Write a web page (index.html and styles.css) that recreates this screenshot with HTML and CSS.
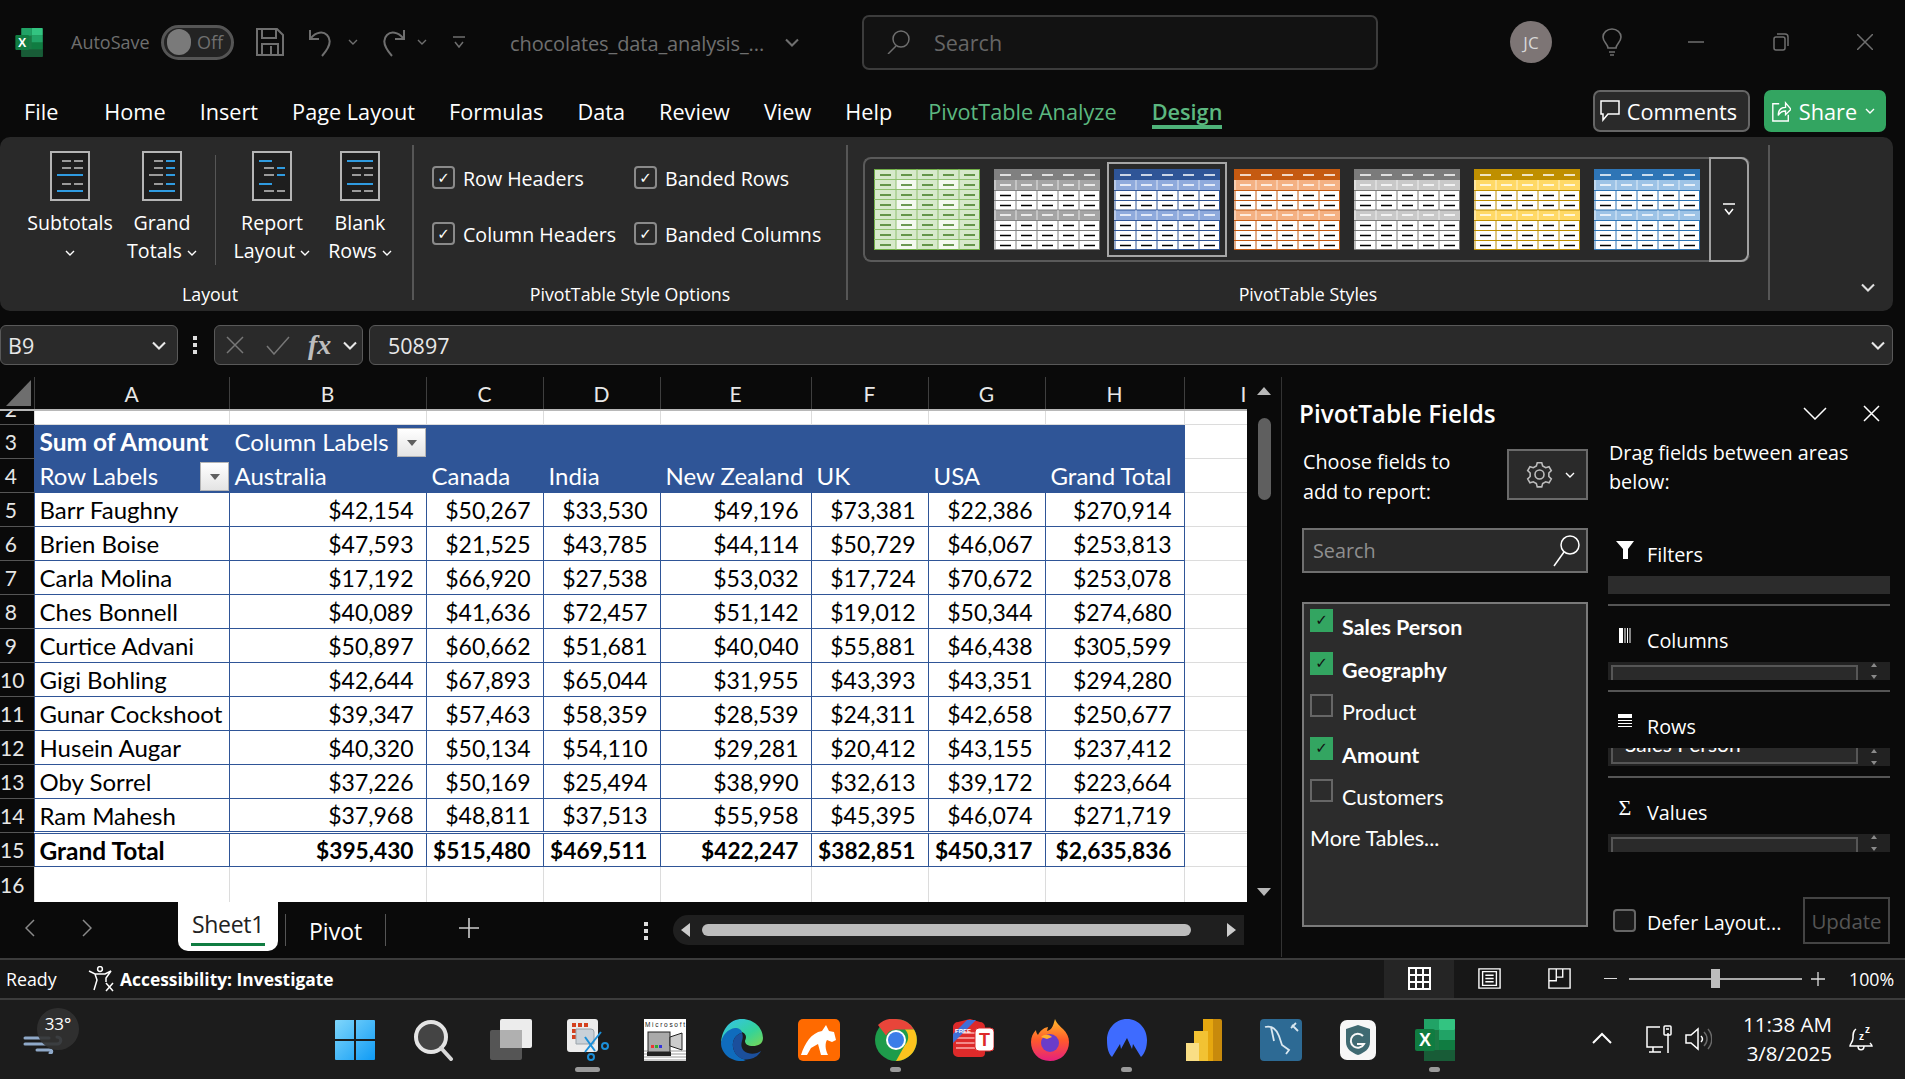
FILE: index.html
```html
<!DOCTYPE html>
<html lang="en">
<head>
    <meta charset="UTF-8">
    <title>chocolates_data_analysis - Excel</title>
    <link rel="stylesheet" href="styles.css">
</head>
<body>
<svg class="defs" width="0" height="0">
    <symbol id="chev" viewBox="0 0 10 6"><path d="M1 1l4 4 4-4" fill="none" stroke="currentColor" stroke-width="1.4"/></symbol>
    <symbol id="xl" viewBox="0 0 40 42">
        <rect x="9" width="31" height="42" rx="2" fill="#1b7a45"/>
        <rect x="24" width="16" height="11" rx="1" fill="#33c481"/>
        <rect x="9" width="15" height="11" fill="#21a366"/>
        <rect x="24" y="11" width="16" height="10" fill="#21a366"/>
        <rect x="24" y="21" width="16" height="10" fill="#107c41"/>
        <rect x="9" y="31" width="31" height="11" fill="#185c37"/>
        <rect y="10" width="20" height="22" rx="2" fill="#107c41"/>
        <text x="10" y="27" class="xl-x">X</text>
    </symbol>
    <symbol id="thumb" viewBox="0 0 106 81">
        <rect width="106" height="81" fill="#fff"/>
        <rect width="106" height="11" class="th-head"/>
        <rect y="11" width="106" height="10" class="th-band"/>
        <rect y="41" width="106" height="10" class="th-band"/>
        <path d="M1 21V41M1 51V81M22 21V41M22 51V81M43 21V41M43 51V81M64 21V41M64 51V81M85 21V41M85 51V81M105.500 21V41M105.500 51V81M0 21.500H106M0 31.500H106M0 41H106M0 51.500H106M0 61.500H106M0 71.500H106M0 80.500H106" class="th-line"/>
        <path d="M1 11V21M22 11V21M43 11V21M64 11V21M85 11V21M1 41V51M22 41V51M43 41V51M64 41V51M85 41V51" stroke="#fff" fill="none" opacity=".7"/>
        <path d="M6 6H106M6 16H106M6 46H106" stroke="#fff" stroke-width="1.6" stroke-dasharray="11 10"/>
        <path d="M6 26.500H106M6 36.500H106M6 56.500H106M6 66.500H106M6 76.500H106" stroke="#000" stroke-width="1.6" stroke-dasharray="11 10"/>
    </symbol>
    <symbol id="spin" viewBox="0 0 8 16"><path d="M4 0l3 4H1zM4 16L1 12h6z" fill="#8a8a8a"/></symbol>
</svg>

<div class="app">
    <header class="titlebar">
        <svg class="t-logo" viewBox="0 0 40 42"><use href="#xl"/></svg>
        <span class="t-autosave">AutoSave</span>
        <span class="toggle"><i class="toggle-knob"></i><span class="toggle-text">Off</span></span>
        <svg class="t-save" viewBox="0 0 28 28" fill="none" stroke="#6f6f6f" stroke-width="2"><path d="M1 1h20l6 6v20H1zM6 1v9h14V1M6 27V16h16v11M15 18v9"/></svg>
        <svg class="t-undo" viewBox="0 0 25 29" fill="none" stroke="#6f6f6f" stroke-width="2"><path d="M1 2v9h9M2 10c5-6 12-7 16-3 5 5 3 12-5 21"/></svg>
        <svg class="t-chev-a"><use href="#chev"/></svg>
        <svg class="t-redo" viewBox="0 0 26 29" fill="none" stroke="#6f6f6f" stroke-width="2"><path d="M25 2v9h-9M24 10c-5-6-12-7-16-3-5 5-3 12 5 21"/></svg>
        <svg class="t-chev-b"><use href="#chev"/></svg>
        <svg class="t-custom" viewBox="0 0 12 13" fill="none" stroke="#6f6f6f" stroke-width="1.5"><path d="M0 1h12M2 6l4 5 4-5"/></svg>
        <span class="t-file">chocolates_data_analysis_...</span>
        <svg class="t-chev-c"><use href="#chev"/></svg>
        <div class="t-search">
            <svg class="t-search-ic" viewBox="0 0 23 24" fill="none" stroke="#6f6f6f" stroke-width="1.5"><circle cx="14" cy="9" r="8"/><path d="M9 16L1 24"/></svg>
            <span>Search</span>
        </div>
        <span class="avatar">JC</span>
        <svg class="t-bulb" viewBox="0 0 20 28" fill="none" stroke="#6f6f6f" stroke-width="1.6"><path d="M6 20c0-4-5-6-5-11a9 8 0 0 1 18 0c0 5-5 7-5 11zM7 24h6M8 27h4"/></svg>
        <svg class="t-min" viewBox="0 0 16 2"><path d="M0 1h16" stroke="#6f6f6f" stroke-width="1.5"/></svg>
        <svg class="t-restore" viewBox="0 0 16 18" fill="none" stroke="#6f6f6f" stroke-width="1.5"><rect x="1" y="4" width="11" height="13" rx="2"/><path d="M4 1h8a3 3 0 0 1 3 3v9"/></svg>
        <svg class="t-close" viewBox="0 0 16 16" fill="none" stroke="#6f6f6f" stroke-width="1.5"><path d="M0 0l16 16M16 0L0 16"/></svg>
    </header>

    <nav class="tabs">
        <a class="tab tab-file">File</a>
        <a class="tab">Home</a>
        <a class="tab">Insert</a>
        <a class="tab">Page Layout</a>
        <a class="tab">Formulas</a>
        <a class="tab">Data</a>
        <a class="tab">Review</a>
        <a class="tab">View</a>
        <a class="tab">Help</a>
        <a class="tab tab-green tab-analyze">PivotTable Analyze</a>
        <a class="tab tab-green tab-active">Design</a>
        <button class="btn-comments">
            <svg class="ic-comment" viewBox="0 0 20 22" fill="none" stroke="#fff" stroke-width="1.5"><path d="M1 1h18v13H8l-5 6v-6H1z"/></svg>
            Comments
        </button>
        <button class="btn-share">
            <svg class="ic-share" viewBox="0 0 22 24" fill="none" stroke="#fff" stroke-width="1.5"><path d="M9 4H2v19h17v-7M8 17c0-6 3-9 8-9V3l6 7-6 6v-4c-4 0-6 1-8 5z"/></svg>
            Share
            <svg class="ic-share-chev"><use href="#chev"/></svg>
        </button>
    </nav>

    <section class="ribbon">
        <div class="group group-layout">
            <div class="group-body">
                <button class="rb-btn rb-w1">
                    <svg class="rb-ic" viewBox="0 0 40 50"><rect x="1" y="1" width="38" height="48" fill="#1e1e1e" stroke="#b5b5b5" stroke-width="2"/><path d="M12 10h9M24 10h9M12 17h9M24 17h9M12 33h9M24 33h9" class="ln-gray"/><path d="M7 24h26M7 40h26" class="ln-blue"/></svg>
                    <span class="rb-text">Subtotals</span>
                    <span class="rb-text"><svg class="rb-chev"><use href="#chev"/></svg></span>
                </button>
                <button class="rb-btn rb-w2">
                    <svg class="rb-ic" viewBox="0 0 40 50"><rect x="1" y="1" width="38" height="48" fill="#1e1e1e" stroke="#b5b5b5" stroke-width="2"/><path d="M12 10h9M12 17h9M7 24h14M12 33h9" class="ln-gray"/><path d="M24 10h9M24 17h9M24 24h9M24 33h9M7 40h26" class="ln-blue"/></svg>
                    <span class="rb-text">Grand</span>
                    <span class="rb-text">Totals <svg class="rb-chev"><use href="#chev"/></svg></span>
                </button>
                <span class="rb-sep"></span>
                <button class="rb-btn rb-w3">
                    <svg class="rb-ic" viewBox="0 0 40 50"><rect x="1" y="1" width="38" height="48" fill="#1e1e1e" stroke="#b5b5b5" stroke-width="2"/><path d="M12 17h10M12 24h10M12 40h10M25 40h8" class="ln-gray"/><path d="M7 10h13M25 17h8M25 24h8M7 33h13" class="ln-blue"/></svg>
                    <span class="rb-text">Report</span>
                    <span class="rb-text">Layout <svg class="rb-chev"><use href="#chev"/></svg></span>
                </button>
                <button class="rb-btn rb-w4">
                    <svg class="rb-ic" viewBox="0 0 40 50"><rect x="1" y="1" width="38" height="48" fill="#1e1e1e" stroke="#b5b5b5" stroke-width="2"/><path d="M12 17h9M24 17h9M12 24h9M24 24h9M12 40h9M24 40h9" class="ln-gray"/><path d="M7 10h26M7 33h26" class="ln-blue"/></svg>
                    <span class="rb-text">Blank</span>
                    <span class="rb-text">Rows <svg class="rb-chev"><use href="#chev"/></svg></span>
                </button>
            </div>
            <div class="group-label">Layout</div>
        </div>
        <span class="group-sep"></span>
        <div class="group group-options">
            <div class="options">
                <label class="opt"><span class="opt-box">✓</span>Row Headers</label>
                <label class="opt"><span class="opt-box">✓</span>Banded Rows</label>
                <label class="opt"><span class="opt-box">✓</span>Column Headers</label>
                <label class="opt"><span class="opt-box">✓</span>Banded Columns</label>
            </div>
            <div class="group-label">PivotTable Style Options</div>
        </div>
        <span class="group-sep"></span>
        <div class="group group-styles">
            <div class="gallery">
                <svg class="thumb" viewBox="0 0 106 81">
                    <rect width="106" height="81" fill="#70ad47"/>
                    <rect x="1" y="1" width="104" height="79" fill="#d7e9cb"/>
                    <path d="M22 11H43V21H22zM64 11H85V21H64zM22 31H43V41H22zM64 31H85V41H64zM22 51H43V61H22zM64 51H85V61H64zM22 71H43V80H22zM64 71H85V80H64z" fill="#f4f9f0"/>
                    <path d="M22 0V81M43 0V81M64 0V81M85 0V81M0 10.500H106M0 20.500H106M0 30.500H106M0 40.500H106M0 50.500H106M0 60.500H106M0 70.500H106" stroke="#8fbf6f" fill="none"/>
                    <path d="M6 6H106M6 26H106M6 46H106M6 66H106M6 16H106M6 36H106M6 56H106M6 76H106" stroke="#3f7a1f" stroke-width="1.6" stroke-dasharray="11 10"/>
                </svg>
                <svg class="thumb th-gray" viewBox="0 0 106 81"><use href="#thumb"/></svg>
                <svg class="thumb th-blue thumb-on" viewBox="0 0 106 81"><use href="#thumb"/></svg>
                <svg class="thumb th-orange" viewBox="0 0 106 81"><use href="#thumb"/></svg>
                <svg class="thumb th-silver" viewBox="0 0 106 81"><use href="#thumb"/></svg>
                <svg class="thumb th-gold" viewBox="0 0 106 81"><use href="#thumb"/></svg>
                <svg class="thumb th-sky" viewBox="0 0 106 81"><use href="#thumb"/></svg>
                <button class="gallery-more">
                    <svg viewBox="0 0 12 13" fill="none" stroke="#fff" stroke-width="1.5"><path d="M0 1h12M2 6l4 5 4-5"/></svg>
                </button>
            </div>
            <div class="group-label">PivotTable Styles</div>
        </div>
        <span class="group-sep"></span>
        <svg class="ribbon-collapse"><use href="#chev"/></svg>
    </section>

    <div class="formula-bar">
        <div class="name-box"><span>B9</span><svg class="fb-chev"><use href="#chev"/></svg></div>
        <svg class="fb-dots" viewBox="0 0 4 18"><path d="M0 0h4v4H0zM0 7h4v4H0zM0 14h4v4H0z" fill="#ddd"/></svg>
        <div class="fx-box">
            <svg class="fx-ic" viewBox="0 0 20 20" fill="none" stroke="#777" stroke-width="1.5"><path d="M2 2l16 16M18 2L2 18"/></svg>
            <svg class="fx-ic" viewBox="0 0 24 20" fill="none" stroke="#777" stroke-width="1.5"><path d="M1 11l7 8L23 2"/></svg>
            <span class="fx-label">fx</span>
            <svg class="fb-chev"><use href="#chev"/></svg>
        </div>
        <div class="fx-input"><span>50897</span><svg class="fb-chev"><use href="#chev"/></svg></div>
    </div>

    <main class="workspace">
        <div class="sheet-area">
            <div class="sheet-row">
                <div class="grid-wrap">
                    <table class="pivot">
                        <colgroup>
                            <col class="c-head"><col class="c-a"><col class="c-b"><col class="c-c"><col class="c-d"><col class="c-e"><col class="c-f"><col class="c-g"><col class="c-h"><col class="c-i">
                        </colgroup>
                        <tr class="r-cols">
                            <th class="corner"><svg viewBox="0 0 25 26"><path d="M25 0v26H0z" fill="#6e6e6e"/></svg></th>
                            <th>A</th><th>B</th><th>C</th><th>D</th><th>E</th><th>F</th><th>G</th><th>H</th><th class="col-i">I</th>
                        </tr>
                        <tr class="r-clip">
                            <th class="rh"><div class="rh-clip"><span>2</span></div></th>
                            <td></td><td></td><td></td><td></td><td></td><td></td><td></td><td></td><td></td>
                        </tr>
                        <tr class="r-blue">
                            <th class="rh">3</th>
                            <td class="b">Sum of Amount</td>
                            <td class="has-filter">Column Labels<span class="filter-btn"></span></td>
                            <td></td><td></td><td></td><td></td><td></td><td></td><td class="plain"></td>
                        </tr>
                        <tr class="r-blue">
                            <th class="rh">4</th>
                            <td class="has-filter">Row Labels<span class="filter-btn"></span></td>
                            <td>Australia</td><td>Canada</td><td>India</td><td>New Zealand</td><td>UK</td><td>USA</td><td>Grand Total</td><td class="plain"></td>
                        </tr>
                        <tr class="r-data"><th class="rh">5</th><td>Barr Faughny</td><td>$42,154</td><td>$50,267</td><td>$33,530</td><td>$49,196</td><td>$73,381</td><td>$22,386</td><td>$270,914</td><td class="plain"></td></tr>
                        <tr class="r-data"><th class="rh">6</th><td>Brien Boise</td><td>$47,593</td><td>$21,525</td><td>$43,785</td><td>$44,114</td><td>$50,729</td><td>$46,067</td><td>$253,813</td><td class="plain"></td></tr>
                        <tr class="r-data"><th class="rh">7</th><td>Carla Molina</td><td>$17,192</td><td>$66,920</td><td>$27,538</td><td>$53,032</td><td>$17,724</td><td>$70,672</td><td>$253,078</td><td class="plain"></td></tr>
                        <tr class="r-data"><th class="rh">8</th><td>Ches Bonnell</td><td>$40,089</td><td>$41,636</td><td>$72,457</td><td>$51,142</td><td>$19,012</td><td>$50,344</td><td>$274,680</td><td class="plain"></td></tr>
                        <tr class="r-data"><th class="rh">9</th><td>Curtice Advani</td><td>$50,897</td><td>$60,662</td><td>$51,681</td><td>$40,040</td><td>$55,881</td><td>$46,438</td><td>$305,599</td><td class="plain"></td></tr>
                        <tr class="r-data"><th class="rh">10</th><td>Gigi Bohling</td><td>$42,644</td><td>$67,893</td><td>$65,044</td><td>$31,955</td><td>$43,393</td><td>$43,351</td><td>$294,280</td><td class="plain"></td></tr>
                        <tr class="r-data"><th class="rh">11</th><td>Gunar Cockshoot</td><td>$39,347</td><td>$57,463</td><td>$58,359</td><td>$28,539</td><td>$24,311</td><td>$42,658</td><td>$250,677</td><td class="plain"></td></tr>
                        <tr class="r-data"><th class="rh">12</th><td>Husein Augar</td><td>$40,320</td><td>$50,134</td><td>$54,110</td><td>$29,281</td><td>$20,412</td><td>$43,155</td><td>$237,412</td><td class="plain"></td></tr>
                        <tr class="r-data"><th class="rh">13</th><td>Oby Sorrel</td><td>$37,226</td><td>$50,169</td><td>$25,494</td><td>$38,990</td><td>$32,613</td><td>$39,172</td><td>$223,664</td><td class="plain"></td></tr>
                        <tr class="r-data r-last"><th class="rh">14</th><td>Ram Mahesh</td><td>$37,968</td><td>$48,811</td><td>$37,513</td><td>$55,958</td><td>$45,395</td><td>$46,074</td><td>$271,719</td><td class="plain"></td></tr>
                        <tr class="r-data r-total"><th class="rh">15</th><td>Grand Total</td><td>$395,430</td><td>$515,480</td><td>$469,511</td><td>$422,247</td><td>$382,851</td><td>$450,317</td><td>$2,635,836</td><td class="plain"></td></tr>
                        <tr class="r-empty"><th class="rh">16</th><td></td><td></td><td></td><td></td><td></td><td></td><td></td><td></td><td></td></tr>
                    </table>
                </div>
                <div class="vscroll">
                    <span class="arrow-up"></span>
                    <span class="vscroll-thumb"></span>
                    <span class="arrow-down"></span>
                </div>
            </div>
            <div class="sheet-tabs">
                <svg class="nav-arrow nav-prev" viewBox="0 0 10 18" fill="none" stroke="#8a8a8a" stroke-width="1.5"><path d="M9 1L1 9l8 8"/></svg>
                <svg class="nav-arrow nav-next" viewBox="0 0 10 18" fill="none" stroke="#8a8a8a" stroke-width="1.5"><path d="M1 1l8 8-8 8"/></svg>
                <div class="sheet-tab"><span>Sheet1</span></div>
                <span class="tab-sep tab-sep-a"></span>
                <span class="sheet-name">Pivot</span>
                <span class="tab-sep"></span>
                <svg class="tab-plus" viewBox="0 0 20 20" stroke="#ccc" stroke-width="1.6"><path d="M10 0v20M0 10h20"/></svg>
                <svg class="tab-dots" viewBox="0 0 4 18"><path d="M0 0h4v4H0zM0 7h4v4H0zM0 14h4v4H0z" fill="#ddd"/></svg>
                <div class="hscroll">
                    <span class="arrow-left"></span>
                    <span class="hscroll-thumb"></span>
                    <span class="arrow-right"></span>
                </div>
            </div>
        </div>

        <aside class="panel">
            <div class="panel-head">
                <span class="panel-title">PivotTable Fields</span>
                <svg class="panel-down" viewBox="0 0 24 13" fill="none" stroke="#fff" stroke-width="1.5"><path d="M1 1l11 11L23 1"/></svg>
                <svg class="panel-close" viewBox="0 0 17 17" fill="none" stroke="#fff" stroke-width="1.5"><path d="M1 1l15 15M16 1L1 16"/></svg>
            </div>
            <div class="panel-cols">
                <div class="panel-left">
                    <div class="choose-row">
                        <p class="choose-text">Choose fields to<br>add to report:</p>
                        <div class="gear-box">
                            <svg class="gear" viewBox="0 0 24 24" fill="none" stroke="#bdbdbd" stroke-width="1.4"><circle cx="12" cy="12" r="4"/><path d="M10 1.500h4l.8 3 2.700 1.500 3-.9 2 3.400-2.200 2.200v3.100l2.200 2.200-2 3.400-3-.9-2.700 1.500-.8 3h-4l-.8-3-2.700-1.500-3 .9-2-3.400 2.200-2.200v-3.100l-2.200-2.200 2-3.400 3 .9 2.700-1.500z"/></svg>
                            <svg class="gear-chev"><use href="#chev"/></svg>
                        </div>
                    </div>
                    <div class="field-search">
                        <span>Search</span>
                        <svg viewBox="0 0 27 32" fill="none" stroke="#fff" stroke-width="1.5"><circle cx="17" cy="10" r="9"/><path d="M11 17L1 31"/></svg>
                    </div>
                    <div class="field-list">
                        <div class="field on"><span class="field-box">✓</span>Sales Person</div>
                        <div class="field on"><span class="field-box">✓</span>Geography</div>
                        <div class="field"><span class="field-box"></span>Product</div>
                        <div class="field on"><span class="field-box">✓</span>Amount</div>
                        <div class="field"><span class="field-box"></span>Customers</div>
                        <div class="more-tables">More Tables...</div>
                    </div>
                </div>
                <div class="panel-right">
                    <p class="drag-text">Drag fields between areas<br>below:</p>
                    <div class="area">
                        <div class="area-head">
                            <svg class="area-ic" viewBox="0 0 18 18"><path d="M0 0h18l-6 8v10H7V8z" fill="#fff"/></svg>Filters
                        </div>
                        <div class="area-box"></div>
                    </div>
                    <div class="area">
                        <div class="area-head">
                            <svg class="area-ic" viewBox="0 0 18 18"><path d="M3 1h4v15H3zM8.500 1h1v15h-1zM11 1h1v15h-1zM13.500 1h1v15h-1z" fill="#fff"/></svg>Columns
                        </div>
                        <div class="area-box area-list"><div class="area-item"></div><svg class="spin"><use href="#spin"/></svg></div>
                    </div>
                    <div class="area">
                        <div class="area-head">
                            <svg class="area-ic" viewBox="0 0 18 18"><path d="M2 1h14v4H2zM2 7h14v1H2zM2 10h14v1H2zM2 13h14v1H2z" fill="#fff"/></svg>Rows
                        </div>
                        <div class="area-box area-list"><div class="area-item area-item-up">Sales Person</div><svg class="spin"><use href="#spin"/></svg></div>
                    </div>
                    <div class="area area-end">
                        <div class="area-head">
                            <span class="area-ic area-sigma">Σ</span>Values
                        </div>
                        <div class="area-box area-list"><div class="area-item area-item-low">Sum of Amount</div><svg class="spin"><use href="#spin"/></svg></div>
                    </div>
                    <div class="defer-row">
                        <span class="defer-box"></span>
                        <span class="defer-text">Defer Layout...</span>
                        <button class="btn-update">Update</button>
                    </div>
                </div>
            </div>
        </aside>
    </main>

    <footer class="statusbar">
        <span class="st-ready">Ready</span>
        <svg class="st-acc" viewBox="0 0 26 26" fill="none" stroke="#fff" stroke-width="1.5"><circle cx="12" cy="3" r="2.400"/><path d="M1 5l6 3h10l6-3-5 7v4M7 8l2 6-3 10M18 17l7 8M25 17l-7 8"/></svg>
        <span class="st-acc-text">Accessibility: Investigate</span>
        <button class="view-btn view-on">
            <svg viewBox="0 0 23 23" fill="none" stroke="#fff" stroke-width="2"><path d="M1 1h21v21H1zM8 1v21M15 1v21M1 8h21M1 15h21"/></svg>
        </button>
        <button class="view-btn">
            <svg viewBox="0 0 25 23" fill="none" stroke="#fff" stroke-width="1.5"><path d="M1 1h23v21H1zM5 4h15v15H5zM8 8h9M8 11.500h9M8 15h9"/></svg>
        </button>
        <button class="view-btn">
            <svg viewBox="0 0 25 23" fill="none" stroke="#fff" stroke-width="1.5"><path d="M1 1h23v21H1zM1 14h8V1M9 10h7V1"/></svg>
        </button>
        <span class="zoom-minus"></span>
        <span class="zoom-track"><i class="zoom-thumb"></i></span>
        <svg class="zoom-plus" viewBox="0 0 14 14" stroke="#ddd" stroke-width="1.3"><path d="M7 0v14M0 7h14"/></svg>
        <span class="zoom-val">100%</span>
    </footer>

    <div class="taskbar">
        <div class="weather">
            <svg class="wind" viewBox="0 0 40 24" fill="none" stroke="#8fa9c9" stroke-width="3" stroke-linecap="round"><path d="M2 8h24M2 14h32c5 0 5-7 0-7M14 20h12c4 0 3 3 1 3"/></svg>
            <span class="temp">33°</span>
        </div>
        <div class="tb-icons">
            <button class="tb-item tb-start">
                <svg class="tb-ic" viewBox="0 0 42 42"><defs><linearGradient id="g-win" x1="0" y1="0" x2="1" y2="1"><stop offset="0" stop-color="#7fd6fb"/><stop offset="1" stop-color="#0f9bf5"/></linearGradient></defs><path d="M1 2a1 1 0 0 1 1-1h18v19H1zM22 1h18a1 1 0 0 1 1 1v18H22zM1 22h19v19H2a1 1 0 0 1-1-1zM22 22h19v18a1 1 0 0 1-1 1H22z" fill="url(#g-win)"/></svg>
            </button>
            <button class="tb-item">
                <svg class="tb-ic" viewBox="0 0 42 42"><circle cx="18" cy="18" r="15" fill="#444" stroke="#e4e4e4" stroke-width="4"/><path d="M28 29l10 11" stroke="#d8d8d8" stroke-width="4" stroke-linecap="round"/></svg>
            </button>
            <button class="tb-item">
                <svg class="tb-ic" viewBox="0 0 42 42"><rect x="10" y="0" width="32" height="29" rx="2" fill="#ececec"/><rect y="11" width="32" height="30" rx="2" fill="#555"/><rect x="10" y="11" width="22" height="18" fill="#b0b0b0"/></svg>
            </button>
            <button class="tb-item tb-run tb-wide">
                <svg class="tb-ic" viewBox="0 0 42 42"><rect width="31" height="33" rx="3" fill="#ececec"/><path d="M5 4h4v4H5zM11 4h4v4h-4zM17 4h4v4h-4zM5 10h4v4H5zM5 16h4v4H5z" fill="#d4411e"/><path d="M9 10h15a3 3 0 0 1 3 3v12H9z" fill="#c9d1d8" stroke="#9aa3aa"/><path d="M18 33l16-20M28 32L18 18" stroke="#1b8fd8" stroke-width="2"/><circle cx="38" cy="27" r="3" fill="none" stroke="#1b8fd8" stroke-width="2"/><circle cx="24" cy="38" r="3" fill="none" stroke="#1b8fd8" stroke-width="2"/></svg>
            </button>
            <button class="tb-item">
                <svg class="tb-ic" viewBox="0 0 42 42"><rect width="42" height="42" fill="#fff"/><path d="M0 32h42M0 35h42M0 38h42M0 41h42" stroke="#999"/><text x="1" y="8" class="cam-text" textLength="40">Microsoft</text><rect x="4" y="13" width="22" height="20" fill="#aaa" stroke="#222"/><path d="M26 18l12-4v17l-12-4z" fill="#ccc" stroke="#222"/><rect x="7" y="26" width="3" height="3" fill="#e33"/><rect x="11" y="26" width="3" height="3" fill="#3a3"/><rect x="15" y="26" width="3" height="3" fill="#33d"/><rect x="3" y="33" width="24" height="4" fill="#222"/></svg>
            </button>
            <button class="tb-item">
                <svg class="tb-ic" viewBox="0 0 42 42"><defs><linearGradient id="g-edge" x1="0" y1="0" x2="1" y2="1"><stop offset="0" stop-color="#35c1f1"/><stop offset=".6" stop-color="#34d399"/><stop offset="1" stop-color="#7bd652"/></linearGradient></defs><path d="M21 0c12 0 21 9 21 19 0 6-5 8-10 8-5 0-8-2-8-5 0-1 1-2 1-4 0-4-5-6-9-6-7 0-14 5-16 12C1 10 9 0 21 0z" fill="url(#g-edge)"/><path d="M0 24c1-8 7-14 14-15 4 0 7 2 7 5-6 1-10 7-9 14 1 6 5 11 13 13-2 1-3 1-5 1C9 42 0 34 0 24z" fill="#0f6cbd"/><path d="M21 14c-6 1-10 7-9 14 1 8 8 14 17 12 5-1 9-4 11-8-4 3-12 4-17 0-3-3-3-7-2-10 1-3 1-6 0-8z" fill="#1b4f9c"/></svg>
            </button>
            <button class="tb-item">
                <svg class="tb-ic" viewBox="0 0 42 42"><rect width="42" height="42" rx="5" fill="#ff6a00"/><path d="M3 36c4-12 10-22 21-24l4-6 3 6 5 1 2 8-4 2-5-2c-2 3-2 9 1 15h-7l-3-11-7 4-4 7z" fill="#fff"/></svg>
            </button>
            <button class="tb-item tb-run">
                <svg class="tb-ic" viewBox="0 0 42 42"><circle cx="21" cy="21" r="21" fill="#1e9c4b"/><path d="M21 0a21 21 0 0 1 18 10.500H21a11 11 0 0 0-10 6L3 6A21 21 0 0 1 21 0z" fill="#e8453a"/><path d="M39 10.500A21 21 0 0 1 21 42l9-16a11 11 0 0 0 0-15.500z" fill="#fcc31e"/><circle cx="21" cy="21" r="10" fill="#fff"/><circle cx="21" cy="21" r="8" fill="#3b7de8"/></svg>
            </button>
            <button class="tb-item">
                <svg class="tb-ic" viewBox="0 0 42 42"><path d="M1 8a5 5 0 0 1 5-5l12-3 10 3a5 5 0 0 1 5 5v26a4 4 0 0 1-4 4H6a5 5 0 0 1-5-5z" fill="#dd2a2a"/><path d="M4 14h24M4 19h24M4 24h24M4 29h24" stroke="#f38a8a" stroke-width="2"/><path d="M1 15L15 1h9L1 24z" fill="#3f6fd8"/><text x="3" y="14" class="free-text">FREE</text><rect x="23" y="9" width="19" height="23" rx="4" fill="#fff" stroke="#dd2a2a"/><text x="27" y="27" class="free-t">T</text></svg>
            </button>
            <button class="tb-item">
                <svg class="tb-ic" viewBox="0 0 42 42"><defs><linearGradient id="g-ff" x1="0" y1="0" x2="0" y2="1"><stop offset="0" stop-color="#ffbd2b"/><stop offset=".5" stop-color="#ff5a2b"/><stop offset="1" stop-color="#e5207e"/></linearGradient></defs><path d="M21 42C9 42 2 33 2 23c0-5 2-9 5-12 0 2 1 4 2 5 2-4 5-7 10-8l-1 4c6-2 6-6 8-12 2 5 5 7 8 10 4 4 6 8 6 13 0 11-8 19-19 19z" fill="url(#g-ff)"/><circle cx="21" cy="24" r="9" fill="#6a3cc9"/><path d="M12 18c3-3 8-3 11 0l-5 2z" fill="#ffb02e"/></svg>
            </button>
            <button class="tb-item tb-run">
                <svg class="tb-ic" viewBox="0 0 42 42"><path d="M21 0c12 0 20 10 20 21 0 7-2 13-6 17l-8-13-1 5-5-11-6 11-1-5-8 13C2 34 1 28 1 21 1 10 9 0 21 0z" fill="#3e6bff"/></svg>
            </button>
            <button class="tb-item">
                <svg class="tb-ic" viewBox="0 0 42 42"><path d="M20 0h17a2 2 0 0 1 2 2v40H20z" fill="#c88a0c"/><path d="M20 0h10v42H20z" fill="#e6a70f"/><path d="M11 12h14v30H11z" fill="#f2c233"/><path d="M3 24h13v18H3z" fill="#f9de85"/></svg>
            </button>
            <button class="tb-item">
                <svg class="tb-ic" viewBox="0 0 42 42"><rect width="42" height="42" rx="4" fill="#2d6a94"/><path d="M5 8c7-2 12 3 14 9l3 9 7 5-3 4M11 8l3 14M32 6l6 6M36 4l-5 5" fill="none" stroke="#d9e7f0" stroke-width="1.8"/></svg>
            </button>
            <button class="tb-item">
                <svg class="tb-ic" viewBox="0 0 42 42"><rect x="3" y="1" width="36" height="40" rx="7" fill="#f7f7f7"/><path d="M21 6l12 4v13c0 7-6 11-12 13C15 34 9 30 9 23V10z" fill="#3f6a72"/><path d="M26 17a7 7 0 1 0 1 8h-7" fill="none" stroke="#f7f7f7" stroke-width="2"/></svg>
            </button>
            <button class="tb-item tb-run">
                <svg class="tb-ic" viewBox="0 0 40 42"><use href="#xl"/></svg>
            </button>
        </div>
        <div class="tray">
            <svg class="tray-up" viewBox="0 0 20 12" fill="none" stroke="#fff" stroke-width="2"><path d="M1 11l9-9 9 9"/></svg>
            <svg class="tray-net" viewBox="0 0 27 29" fill="none" stroke="#fff" stroke-width="1.5"><path d="M15 2H2v20h16M8 22v5M4 27h12M23 8v20"/><rect x="19" y="1" width="7" height="9" rx="1"/><path d="M21 4h3"/></svg>
            <svg class="tray-vol" viewBox="0 0 27 24" fill="none" stroke="#fff" stroke-width="1.5"><path d="M1 8h5l7-6v20l-7-6H1z"/><path d="M16 9c2 2 2 4 0 6"/><path d="M19 5c4 4 4 10 0 14M23 2c5 6 5 14 0 20" stroke="#6a6a6a"/></svg>
            <div class="clock"><span>11:38 AM</span><span>3/8/2025</span></div>
            <svg class="tray-bell" viewBox="0 0 24 28" fill="none" stroke="#fff" stroke-width="1.5"><path d="M7 4C4 6 4 9 4 13c0 4-3 6-3 8h22c0-1-1-2-2-3M9 21c0 5 6 5 6 0"/><text x="10" y="15" class="bell-z">z</text><text x="16" y="8" class="bell-z">z</text></svg>
        </div>
    </div>
</div>
</body>
</html>
```

FILE: styles.css
```css
* {
    box-sizing: border-box;
}
html, body {
    margin: 0;
    height: 100%;
    background-color: #0a0a0a;
}
body {
    font-family: "Open Sans", "Noto Sans", sans-serif;
    color: #fff;
    overflow: hidden;
}
button {
    font: inherit;
    color: inherit;
    background: none;
    border: 0;
    padding: 0;
}
p {
    margin: 0;
}
.defs {
    display: block;
    height: 0;
}
.xl-x {
    font: 700 18px "Liberation Sans", sans-serif;
    fill: #fff;
    text-anchor: middle;
}
.app {
    width: 1905px;
    height: 1079px;
    display: flex;
    flex-direction: column;
    overflow: hidden;
}

/* title bar */
.titlebar {
    height: 85px;
    flex: none;
    display: flex;
    align-items: center;
    color: #6f6f6f;
    padding-bottom: 1px;
}
.titlebar > * {
    flex: none;
}
.t-logo { width: 28px; height: 29px; margin-left: 15px; }
.t-autosave { margin-left: 28px; width: 79px; font-size: 18px; white-space: nowrap; }
.toggle {
    margin-left: 11px;
    width: 73px;
    height: 35px;
    border: 3px solid #555;
    border-radius: 18px;
    display: flex;
    align-items: center;
    padding-left: 3px;
    background-color: #232323;
}
.toggle-knob {
    width: 24px;
    height: 26px;
    border-radius: 13px;
    background-color: #7a7a7a;
}
.toggle-text { margin-left: 6px; font-size: 18px; }
.t-save { margin-left: 22px; width: 28px; height: 28px; }
.t-undo { margin-left: 25px; width: 25px; height: 29px; }
.t-chev-a { margin-left: 14px; width: 10px; height: 6px; }
.t-redo { margin-left: 21px; width: 26px; height: 29px; }
.t-chev-b { margin-left: 12px; width: 10px; height: 6px; }
.t-custom { margin-left: 26px; width: 12px; height: 13px; }
.t-file { margin-left: 45px; width: 254px; font-size: 20px; white-space: nowrap; letter-spacing: -.1px; padding-top: 2px; }
.t-chev-c { margin-left: 20px; width: 16px; height: 9px; }
.t-search {
    margin-left: 62px;
    width: 516px;
    height: 55px;
    border: 2px solid #3c3c3c;
    border-radius: 7px;
    background-color: #121212;
    display: flex;
    align-items: center;
    padding-left: 23px;
    font-size: 21.500px;
    color: #666;
}
.t-search-ic { width: 23px; height: 24px; margin-right: 24px; }
.avatar {
    margin-left: 132px;
    width: 42px;
    height: 42px;
    border-radius: 50%;
    background-color: #7d7575;
    color: #d8d8d8;
    display: flex;
    align-items: center;
    justify-content: center;
    font-size: 17px;
}
.t-bulb { margin-left: 50px; width: 20px; height: 28px; }
.t-min { margin-left: 66px; width: 16px; height: 2px; }
.t-restore { margin-left: 69px; width: 16px; height: 18px; }
.t-close { margin-left: 68px; width: 16px; height: 16px; }

/* tabs */
.tabs {
    height: 52px;
    flex: none;
    display: flex;
    align-items: center;
    padding: 0 19px 0 24px;
    font-size: 21.700px;
    gap: 34px;
}
.tab {
    position: relative;
    white-space: nowrap;
}
.tab-file { margin-right: 12px; }
.tab-green { color: #5cb880; }
.tab-analyze { margin-left: 2px; }
.tab-active { font-weight: 600; margin-left: 1px; }
.tab-active::after {
    content: "";
    position: absolute;
    left: 0;
    right: 0;
    bottom: -3px;
    height: 4px;
    background-color: #4fb37a;
}
.btn-comments {
    margin-left: auto;
    width: 157px;
    height: 42px;
    border: 2px solid #666;
    border-radius: 7px;
    background-color: #2a2a2a;
    display: flex;
    align-items: center;
    justify-content: center;
    gap: 7px;
    white-space: nowrap;
}
.ic-comment { width: 20px; height: 22px; margin-left: -6px; }
.btn-share {
    margin-left: -20px;
    width: 122px;
    height: 42px;
    border-radius: 7px;
    background-color: #33a561;
    display: flex;
    align-items: center;
    justify-content: center;
    gap: 8px;
}
.ic-share { width: 20px; height: 22px; margin-left: -4px; }
.ic-share-chev { width: 10px; height: 6px; }

/* ribbon */
.ribbon {
    width: 1893px;
    height: 174px;
    flex: none;
    background-color: #292929;
    border-radius: 10px;
    display: flex;
    font-size: 19.600px;
}
.group {
    flex: none;
    display: flex;
    flex-direction: column;
    height: 100%;
}
.group-label {
    margin-top: auto;
    height: 24px;
    line-height: 24px;
    margin-bottom: 5px;
    text-align: center;
    font-size: 17.800px;
}
.group-sep {
    flex: none;
    width: 2px;
    height: 155px;
    margin-top: 8px;
    background-color: #565656;
}
.group-layout { width: 412px; padding-left: 8px; }
.group-body {
    display: flex;
    padding-left: 12px;
}
.rb-btn {
    flex: none;
    display: flex;
    flex-direction: column;
    align-items: center;
    padding-top: 14px;
}
.rb-w1 { width: 100px; }
.rb-w2 { width: 84px; }
.rb-w3 { width: 92px; }
.rb-w4 { width: 84px; }
.rb-ic { width: 40px; height: 50px; margin-bottom: 8px; }
.rb-text { height: 28px; line-height: 28px; white-space: nowrap; }
.rb-chev { width: 10px; height: 6px; vertical-align: 2px; }
.rb-sep {
    flex: none;
    width: 1px;
    height: 110px;
    margin: 18px 10px 0 11px;
    background-color: #565656;
}
.ln-gray, .ln-blue { stroke-width: 2; fill: none; }
.ln-gray { stroke: #9a9a9a; }
.ln-blue { stroke: #2f9be0; }
.group-options { width: 432px; }
.options {
    display: grid;
    grid-template-columns: 202px auto;
    grid-auto-rows: 23px;
    row-gap: 33px;
    margin: 30px 0 0 18px;
}
.opt {
    display: flex;
    align-items: center;
    white-space: nowrap;
    line-height: 25px;
}
.opt-box {
    width: 23px;
    height: 23px;
    margin: -2px 8px 0 0;
    border: 2px solid #8a8a8a;
    border-radius: 4px;
    display: flex;
    align-items: center;
    justify-content: center;
    font: 15px "DejaVu Sans", sans-serif;
}
.group-styles { width: 920px; }
.gallery {
    width: 887px;
    height: 105px;
    margin: 20px 0 0 15px;
    padding-left: 11px;
    border: 2px solid #5a5a5a;
    border-radius: 8px;
    display: flex;
    align-items: center;
    gap: 14px;
    flex: none;
    border-right: 0;
}
.thumb {
    flex: none;
    width: 106px;
    height: 81px;
    margin-left: -2px;
    margin-right: 2px;
}
.thumb-on {
    outline: 2px solid #a6a6a6;
    outline-offset: 5px;
}
.th-head { fill: var(--head); }
.th-band { fill: var(--band); }
.th-line { stroke: var(--line); fill: none; }
.th-gray { --head: #808080; --band: #a5a5a5; --line: #808080; }
.th-blue { --head: #2f5597; --band: #8faadc; --line: #2f5597; }
.th-orange { --head: #c55a11; --band: #f4b183; --line: #c55a11; }
.th-silver { --head: #7b7b7b; --band: #c9c9c9; --line: #7b7b7b; }
.th-gold { --head: #bf8f00; --band: #ffd966; --line: #bf8f00; }
.th-sky { --head: #2e75b6; --band: #9dc3e6; --line: #2e75b6; }
.gallery-more {
    margin-left: -7px;
    width: 40px;
    height: 105px;
    flex: none;
    border: 2px solid #a0a0a0;
    border-radius: 0 8px 8px 0;
    display: flex;
    align-items: center;
    justify-content: center;
}
.gallery-more svg { width: 12px; height: 13px; }
.ribbon-collapse {
    width: 16px;
    height: 9px;
    margin: 146px 0 0 90px;
    color: #e0e0e0;
}

/* formula bar */
.formula-bar {
    height: 40px;
    flex: none;
    margin-top: 14px;
    display: flex;
    align-items: stretch;
    color: #e8e8e8;
    font-size: 21.500px;
}
.name-box, .fx-box, .fx-input {
    border: 1px solid #595959;
    border-radius: 6px;
    background-color: #2a2a2a;
    display: flex;
    align-items: center;
}
.name-box {
    width: 178px;
    padding: 0 10px 0 7px;
    justify-content: space-between;
}
.fb-chev { width: 16px; height: 9px; flex: none; }
.fb-dots { width: 4px; height: 18px; margin: 11px 17px 0 15px; }
.fx-box {
    width: 149px;
    padding-left: 10px;
}
.fx-ic { width: 20px; height: 20px; margin-right: 21px; flex: none; }
.fx-ic + .fx-ic { width: 24px; margin-right: 18px; }
.fx-label {
    font: italic 700 28px "Liberation Serif", serif;
    margin-right: 11px;
    color: #bdbdbd;
}
.fx-input {
    width: 1524px;
    margin-left: 6px;
    padding: 0 6px 0 18px;
    justify-content: space-between;
}

/* sheet */
.workspace {
    flex: none;
    height: 581px;
    margin-top: 12px;
    display: flex;
}
.sheet-area {
    width: 1282px;
    flex: none;
    display: flex;
    flex-direction: column;
}
.sheet-row {
    display: flex;
    height: 525px;
    flex: none;
}
.grid-wrap {
    width: 1247px;
    flex: none;
    overflow: hidden;
    background-color: #fff;
}
.pivot {
    table-layout: fixed;
    width: 1247px;
    border-collapse: collapse;
    font-family: Lato, "Open Sans", sans-serif;
    font-size: 21px;
    color: #000;
}
.c-head { width: 34px; }
.c-a { width: 195px; }
.c-b { width: 197px; }
.c-c { width: 117px; }
.c-d { width: 117px; }
.c-e { width: 151px; }
.c-f { width: 117px; }
.c-g { width: 117px; }
.c-h { width: 139px; }
.c-i { width: 63px; }
.pivot th, .pivot td {
    padding: 0;
    overflow: hidden;
    white-space: nowrap;
}
.pivot td {
    padding: 0 5px;
    border: 1px solid #dcdcdc;
    font-size: 24px;
}
.r-cols th {
    height: 33px;
    background-color: #0a0a0a;
    color: #e8e8e8;
    font-weight: 400;
    border-right: 1px solid #3f3f3f;
    border-bottom: 2px solid #b8b8b8;
}
.corner svg {
    display: block;
    width: 25px;
    height: 26px;
    margin-left: 6px;
}
.col-i {
    text-align: right;
    padding-right: 2px;
}
.pivot .rh {
    background-color: #0a0a0a;
    color: #e6e6e6;
    font-weight: 400;
    text-align: center;
    padding-right: 12px;
    border-bottom: 1px solid #555;
}
.r-clip { height: 13px; }
.rh-clip {
    height: 13px;
    overflow: hidden;
}
.rh-clip span {
    display: block;
    line-height: 34px;
    margin-top: -19px;
}
.r-blue { height: 34px; }
.r-blue td {
    background-color: #2f5597;
    color: #fff;
    border-color: #2f5597;
}
.pivot .r-blue .plain, .pivot .r-data .plain {
    background-color: #fff;
    border-color: #dcdcdc;
}
.pivot .r-blue .b { font-weight: 700; font-size: 24.500px; }
.has-filter { position: relative; }
.filter-btn {
    position: absolute;
    right: 0;
    top: 3px;
    width: 29px;
    height: 29px;
    background: linear-gradient(#fff, #e4e4e4);
    border: 1px solid #b5b5b5;
}
.filter-btn::after {
    content: "";
    position: absolute;
    left: 9px;
    top: 11px;
    border: 5px solid transparent;
    border-top: 6px solid #5f5f5f;
    border-bottom: 0;
}
.r-data { height: 34px; }
.pivot .r-data td {
    border-color: #2f5597;
    text-align: right;
    padding-right: 12px;
    font-size: 23px;
}
.pivot .r-data td:nth-child(2) {
    text-align: left;
    padding-right: 0;
    font-size: 24px;
}
.pivot .r-last td { border-bottom: 3px double #2f5597; }
.pivot .r-total td { font-weight: 700; font-size: 22.700px; }
.pivot .r-total td:nth-child(2) { font-size: 24.500px; }
.r-empty { height: 36px; }

/* scroll bars and sheet tabs */
.vscroll {
    width: 35px;
    flex: none;
    border-right: 1px solid #333;
    display: flex;
    flex-direction: column;
    align-items: center;
    padding: 10px 0 6px;
}
.arrow-up, .arrow-down, .arrow-left, .arrow-right {
    width: 0;
    height: 0;
    border: 7px solid transparent;
    flex: none;
}
.arrow-up { border-bottom: 8px solid #b8b8b8; border-top: 0; }
.arrow-down { border-top: 8px solid #b8b8b8; border-bottom: 0; margin-top: auto; }
.vscroll-thumb {
    width: 13px;
    height: 82px;
    margin-top: 23px;
    border-radius: 7px;
    background-color: #5f5f5f;
}
.sheet-tabs {
    height: 55px;
    flex: none;
    display: flex;
    align-items: flex-start;
    color: #fff;
    font-size: 23px;
    border-right: 1px solid #333;
}
.nav-arrow { width: 10px; height: 18px; margin-top: 17px; flex: none; }
.nav-prev { margin-left: 25px; }
.nav-next { margin-left: 47px; }
.sheet-tab {
    width: 100px;
    height: 49px;
    margin-left: 86px;
    background-color: #fff;
    color: #222;
    border-radius: 0 0 10px 10px;
    text-align: center;
    flex: none;
}
.sheet-tab span {
    display: inline-block;
    height: 44px;
    line-height: 44px;
    padding: 0 1px;
    border-bottom: 3px solid #107c41;
    letter-spacing: -.3px;
}
.tab-sep {
    width: 1px;
    height: 32px;
    margin-top: 12px;
    background-color: #555;
    flex: none;
}
.tab-sep-a { margin-left: 7px; }
.sheet-name { margin: 13px 23px 0 23px; }
.tab-plus { width: 20px; height: 20px; margin: 16px 0 0 73px; flex: none; }
.tab-dots { width: 4px; height: 18px; margin: 20px 0 0 165px; flex: none; }
.hscroll {
    width: 571px;
    height: 30px;
    margin: 13px 0 0 25px;
    flex: none;
    border-radius: 15px 0 0 15px;
    background-color: #1f1f1f;
    display: flex;
    align-items: center;
    padding: 0 8px 0 8px;
}
.arrow-left { border-right: 9px solid #ccc; border-left: 0; }
.arrow-right { border-left: 9px solid #ccc; border-right: 0; margin-left: auto; }
.hscroll-thumb {
    width: 489px;
    height: 12px;
    margin-left: 12px;
    border-radius: 6px;
    background-color: #bcbcbc;
}

/* field panel */
.panel {
    flex: 1;
    padding: 0 15px 0 20px;
    font-size: 19.800px;
}
.panel-head {
    height: 72px;
    display: flex;
    align-items: center;
}
.panel-title {
    font-size: 24.300px;
    font-weight: 600;
    margin-left: -3px;
}
.panel-down { width: 24px; height: 13px; margin-left: auto; }
.panel-close { width: 17px; height: 17px; margin: 0 10px 0 36px; }
.panel-cols {
    display: grid;
    grid-template-columns: 286px 282px;
    column-gap: 20px;
}
.choose-row {
    height: 51px;
    display: flex;
    justify-content: space-between;
}
.choose-text {
    margin: -2px 0 0 1px;
    line-height: 30px;
    white-space: nowrap;
}
.gear-box {
    width: 81px;
    height: 51px;
    border: 2px solid #6a6a6a;
    background-color: #2a2a2a;
    display: flex;
    align-items: center;
    padding-left: 17px;
    gap: 12px;
}
.gear { width: 27px; height: 27px; }
.gear-chev { width: 10px; height: 6px; }
.field-search {
    height: 45px;
    margin-top: 28px;
    border: 2px solid #6f6f6f;
    background-color: #2a2a2a;
    display: flex;
    align-items: center;
    justify-content: space-between;
    padding: 0 6px 0 9px;
    color: #8f8f8f;
    line-height: 38px;
}
.field-search svg { width: 27px; height: 32px; }
.field-list {
    height: 325px;
    margin-top: 29px;
    border: 2px solid #7a7a7a;
    background-color: #2c2c2c;
    padding: 5px 0 0 6px;
    font-family: Lato, "Open Sans", sans-serif;
    font-size: 21.500px;
}
.field {
    height: 42.500px;
    display: flex;
    line-height: 36px;
}
.field.on { font-weight: 700; }
.field-box {
    width: 23px;
    height: 23px;
    flex: none;
    margin-right: 9px;
    border: 2px solid #666;
    display: flex;
    align-items: center;
    justify-content: center;
    font: 15px/1 "DejaVu Sans", sans-serif;
    color: #111;
}
.on .field-box {
    background-color: #33a561;
    border-color: #33a561;
}
.more-tables {
    line-height: 32px;
}
.drag-text {
    height: 71px;
    margin-top: -11px;
    margin-bottom: 11px;
    line-height: 29px;
    white-space: nowrap;
    margin-left: 1px;
}
.area {
    height: 86px;
    border-bottom: 2px solid #555;
}
.area-end {
    height: 74px;
    border-bottom: 0;
}
.area-head {
    height: 56px;
    padding-top: 21px;
    line-height: 28px;
    display: flex;
}
.area-ic {
    width: 18px;
    height: 18px;
    margin: 0 13px 0 8px;
    flex: none;
}
.area-sigma {
    font: 22px/18px "Liberation Serif", serif;
    text-align: center;
}
.area-box {
    height: 18px;
    background-color: #2c2c2c;
    overflow: hidden;
}
.area-list {
    background-color: #222;
    display: flex;
    align-items: flex-start;
    padding-left: 3px;
}
.area-item {
    width: 247px;
    height: 40px;
    flex: none;
    margin-top: 3px;
    border: 2px solid #565656;
    background-color: #2a2a2a;
    padding: 0 0 0 12px;
    font-family: Lato, "Open Sans", sans-serif;
    font-size: 21px;
    line-height: 28px;
    white-space: nowrap;
}
.area-item-up {
    margin-top: -23px;
    height: 39px;
    padding-top: 3px;
}
.area-item-low { padding-top: 9px; }
.spin { width: 8px; height: 16px; margin: 1px 0 0 12px; flex: none; }
.defer-row {
    display: flex;
    align-items: center;
    margin-top: 45px;
    padding-left: 5px;
}
.defer-box {
    width: 23px;
    height: 23px;
    border: 2px solid #666;
    border-radius: 4px;
    margin-right: 12px;
    background-color: #1a1a1a;
    flex: none;
}
.defer-text { white-space: nowrap; margin-top: 4px; margin-left: -1px; }
.btn-update {
    margin-left: auto;
    width: 87px;
    height: 47px;
    border: 2px solid #444;
    color: #555;
    font-size: 20.500px;
}

/* status bar */
.statusbar {
    height: 40px;
    flex: none;
    display: flex;
    align-items: center;
    background-color: #171717;
    border-top: 2px solid #3c3c3c;
    font-size: 17.800px;
    padding-bottom: 1px;
}
.st-ready { margin-left: 6px; width: 60px; flex: none; }
.st-acc { width: 26px; height: 26px; margin-left: 22px; flex: none; }
.st-acc-text { margin-left: 6px; font-weight: 700; width: 213px; font-size: 17.400px; white-space: nowrap; flex: none; }
.view-btn {
    width: 70px;
    height: 38px;
    flex: none;
    display: flex;
    align-items: center;
    justify-content: center;
}
.view-btn:first-of-type { margin-left: 1051px; }
.view-on { background-color: #252525; }
.view-btn svg { width: 23px; height: 23px; }
.zoom-minus {
    width: 13px;
    height: 1.500px;
    margin-left: 10px;
    background-color: #ddd;
    flex: none;
}
.zoom-track {
    width: 173px;
    height: 2px;
    margin-left: 12px;
    background-color: #aaa;
    display: flex;
    align-items: center;
    flex: none;
}
.zoom-thumb {
    width: 9px;
    height: 19px;
    margin-left: 82px;
    background-color: #bdbdbd;
    flex: none;
}
.zoom-plus { width: 14px; height: 14px; margin-left: 9px; flex: none; }
.zoom-val { margin-left: 24px; white-space: nowrap; flex: none; }

/* taskbar */
.taskbar {
    flex: 1;
    display: flex;
    align-items: flex-start;
    background-color: #1c1c1c;
    border-top: 2px solid #3c3c3c;
}
.weather {
    width: 318px;
    flex: none;
    position: relative;
    height: 78px;
}
.wind {
    position: absolute;
    left: 23px;
    top: 30px;
    width: 40px;
    height: 24px;
}
.temp {
    position: absolute;
    left: 37px;
    top: 8px;
    width: 42px;
    height: 42px;
    padding-top: 4px;
    text-align: center;
    border-radius: 50%;
    background-color: rgba(50, 50, 50, .9);
    font-size: 17px;
}
.tb-icons {
    display: flex;
    flex: none;
}
.tb-item {
    width: 77px;
    height: 78px;
    flex: none;
    padding-top: 19px;
    position: relative;
    display: flex;
    justify-content: center;
}
.tb-ic { width: 42px; height: 42px; }
.tb-start .tb-ic { margin-left: -3px; }
.tb-run::after {
    content: "";
    position: absolute;
    left: 33px;
    top: 67px;
    width: 11px;
    height: 5px;
    border-radius: 3px;
    background-color: #9a9a9a;
}
.tb-wide::after {
    left: 26px;
    width: 25px;
}
.cam-text { font: 6.500px "Liberation Sans", sans-serif; fill: #222; }
.free-text { font: 700 6px "Liberation Sans", sans-serif; fill: #fff; }
.free-t { font: 700 18px "Liberation Sans", sans-serif; fill: #dd2a2a; }
.bell-z { font: 700 10px "Liberation Sans", sans-serif; fill: #fff; stroke: none; }
.tray {
    display: flex;
    align-items: center;
    height: 78px;
    flex: none;
}
.tray-up { width: 20px; height: 12px; margin-left: 119px; margin-top: -2px; }
.tray-net { width: 27px; height: 29px; margin-left: 33px; }
.tray-vol { width: 27px; height: 24px; margin-left: 13px; }
.clock {
    width: 120px;
    display: flex;
    flex-direction: column;
    align-items: flex-end;
    line-height: 29px;
    font-size: 20.500px;
}
.tray-bell { width: 24px; height: 28px; margin-left: 17px; }
```
